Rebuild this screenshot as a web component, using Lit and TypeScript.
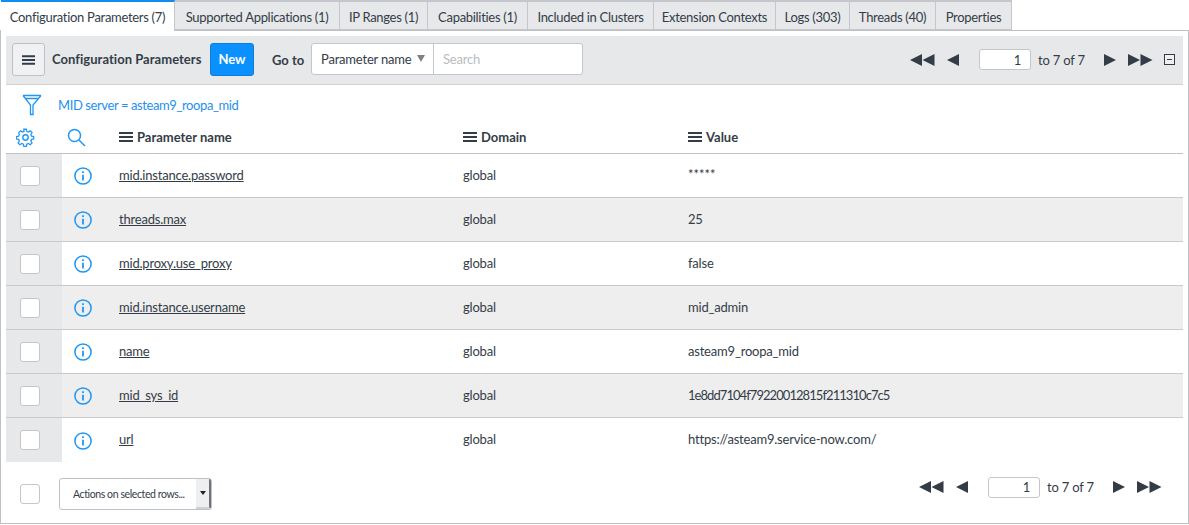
import { LitElement, html, css, svg } from "lit";
import { customElement } from "lit/decorators.js";

const TABS: [string, boolean?][] = [
  ["Configuration Parameters (7)", true],
  ["Supported Applications (1)"],
  ["IP Ranges (1)"],
  ["Capabilities (1)"],
  ["Included in Clusters"],
  ["Extension Contexts"],
  ["Logs (303)"],
  ["Threads (40)"],
  ["Properties"],
];
const ROWS = [
  ["mid.instance.password", "global", "*****", "stars"],
  ["threads.max", "global", "25", ""],
  ["mid.proxy.use_proxy", "global", "false", ""],
  ["mid.instance.username", "global", "mid_admin", ""],
  ["name", "global", "asteam9_roopa_mid", ""],
  ["mid_sys_id", "global", "1e8dd7104f79220012815f211310c7c5", "hash"],
  ["url", "global", "https://asteam9.service-now.com/", ""],
];

const burger = (cls: string) => html`<svg class=${cls} viewBox="0 0 14 10"><path d="M0 0h14v2H0zM0 4h14v2H0zM0 8h14v2H0z" /></svg>`;
const info = html`<svg class="info" viewBox="0 0 20 20" fill="none" stroke="#1f97f5"><circle cx="10" cy="10" r="9" stroke-width="1.7" /><path d="M10 8.5v6.5" stroke-width="2" /><path d="M10 4.8v2" stroke-width="2" /></svg>`;
const tri = (dir: number) => svg`<path d=${dir < 0 ? "M12 0v12L0 6z" : "M0 0v12l12-6z"} />`;
const pager = (bottom: boolean) => html`
  <div class="pager ${bottom ? "bottom" : ""}">
    <svg class="dbl" viewBox="0 0 25 12"><g>${tri(-1)}</g><g transform="translate(12.5)">${tri(-1)}</g></svg>
    <svg class="sgl first" viewBox="0 0 12 12">${tri(-1)}</svg>
    <span class="page">1</span>
    <span class="of">to 7 of 7</span>
    <svg class="sgl next" viewBox="0 0 12 12">${tri(1)}</svg>
    <svg class="dbl" viewBox="0 0 25 12"><g>${tri(1)}</g><g transform="translate(12.5)">${tri(1)}</g></svg>
  </div>`;

@customElement("app-root")
export class AppRoot extends LitElement {
  static styles = css`
    :host { display: block; width: 1189px; height: 525px; background: #fff; color: #343d47; font-family: "Lato", "Noto Sans", sans-serif; font-size: 13px; letter-spacing: -0.2px; overflow: hidden; }
    * { box-sizing: border-box; }
    .tabs { display: grid; grid-template-columns: 174px 165px 88px 100px 126px 122px 74px 86px 76px; margin-left: 1px; width: 1011px; height: 31px; position: relative; z-index: 1; letter-spacing: -0.3px; }
    .tab { height: 30px; background: #e6e8ea; border-top: 2px solid #c4c6cc; border-right: 1px solid #c4c6cc; border-bottom: 1px solid #c4c6cc; display: flex; align-items: center; justify-content: center; white-space: nowrap; padding-top: 2px; }
    .tab.active { background: #fff; border-top-color: #0f8df0; height: 31px; border-bottom: 0; padding-top: 1px; }
    .panel { margin-top: -1px; height: 494px; border: 1px solid #bfc1c6; width: 1189px; padding: 5px 5px 0 5px; display: flex; flex-direction: column; }
    .bar { height: 49px; background: #e6e8ea; border-bottom: 1px solid #cfd1d5; display: flex; align-items: center; padding: 0 0 1px 6px; flex: none; }
    .menu { width: 33px; height: 33px; border: 1px solid #bfc1c6; border-radius: 3px; background: #f0f1f3; display: flex; align-items: center; justify-content: center; }
    .burger { width: 13px; height: 10px; fill: #343d47; }
    .title { font-weight: 700; margin-left: 7px; width: 158px; white-space: nowrap; letter-spacing: 0.04px; padding-bottom: 1px; }
    .new { width: 44px; height: 33px; border-radius: 3px; background: #0a90ff; border: 1px solid #0b7fd8; color: #fff; font-weight: 700; display: flex; align-items: center; justify-content: center; letter-spacing: 0; padding-bottom: 1px; }
    .goto { font-weight: 700; margin-left: 18px; width: 39px; padding-top: 1px; letter-spacing: 0; }
    .search { display: flex; height: 32px; width: 272px; border: 1px solid #c4c6cc; border-radius: 3px; background: #fff; margin-bottom: 1px; }
    .sel { width: 122px; border-right: 1px solid #c4c6cc; display: flex; align-items: center; justify-content: space-between; padding: 0 8px 0 9px; white-space: nowrap; }
    .caret { width: 0; height: 0; border-left: 4px solid transparent; border-right: 4px solid transparent; border-top: 7px solid #7e8287; margin-bottom: 2px; }
    .ph { color: #b9bcc0; padding: 0 9px; display: flex; align-items: center; }
    .right { margin-left: auto; display: flex; align-items: center; padding-right: 8px; }
    .pager { display: flex; align-items: center; height: 22px; }
    .pager svg { fill: #343d47; height: 12px; flex: none; }
    .dbl { width: 25px; }
    .sgl { width: 12px; }
    .first { margin-left: 12px; }
    .page { width: 52px; height: 21px; margin-left: 20px; background: #fff; border: 1px solid #c4c6cc; border-radius: 3px; display: flex; align-items: center; justify-content: flex-end; padding-right: 9px; }
    .of { margin-left: 7px; width: 58px; white-space: nowrap; }
    .next { margin-left: 8px; }
    .pager .next + .dbl { margin-left: 12px; }
    .collapse { width: 11px; height: 11px; margin-left: 11px; border: 1px solid #343d47; display: flex; align-items: center; justify-content: center; background: #eef0f1; }
    .collapse i { width: 5px; height: 1px; background: #343d47; display: block; }
    .filter { height: 40px; flex: none; display: flex; align-items: center; padding-left: 16px; color: #1f8ff0; letter-spacing: -0.4px; }
    .filter svg { width: 20px; height: 22px; margin-top: -1px; }
    .filter span { margin-left: 16px; white-space: nowrap; }
    .grid { display: grid; grid-template-columns: 56px 57px 344px 225px 1fr; }
    .head { height: 29px; border-bottom: 1px solid #c0c2c6; align-items: center; }
    .hc { display: flex; align-items: center; padding: 0 0 3px 10px; }
    .hc + .hc { padding-left: 5px; }
    .hc svg { display: block; }
    .th { display: flex; align-items: center; gap: 4px; font-weight: 700; padding-bottom: 4px; letter-spacing: 0; }
    .th .burger { width: 14px; height: 10px; }
    .row { height: 44px; border-bottom: 1px solid #c8cacd; align-items: center; }
    .row:nth-child(even) { background: #eeeeee; }
    .row:last-child { border-bottom: 0; }
    .cb-cell { align-self: stretch; background: #e6e8ea; display: flex; align-items: center; padding-left: 14px; }
    .cb { width: 20px; height: 20px; background: #fff; border: 1px solid #c4c6cc; border-radius: 3px; display: block; flex: none; }
    .info-cell { display: flex; padding-left: 12px; padding-top: 1px; }
    .info { width: 18px; height: 18px; display: block; }
    .txt { padding-bottom: 2px; }
    .name { text-decoration: underline; text-underline-offset: 1px; }
    .stars { position: relative; top: -1px; letter-spacing: 0; }
    .hash { letter-spacing: -0.94px; }
    .foot { flex: 1; display: flex; align-items: flex-start; padding-left: 14px; position: relative; }
    .foot .cb { margin-top: 22px; }
    .actions { margin-left: 19px; margin-top: 16px; width: 153px; height: 32px; border: 1px solid #bfc1c6; border-radius: 3px; display: flex; background: #fff; font-size: 10.5px; letter-spacing: -0.4px; overflow: hidden; }
    .actions span { flex: 1; display: flex; align-items: center; padding: 0 0 1px 13px; white-space: nowrap; }
    .actions b { width: 15px; background: #eeeff0; border-right: 2px solid #6f7276; border-bottom: 2px solid #cfd1d3; display: flex; align-items: center; justify-content: center; }
    .actions b i { width: 0; height: 0; border-left: 3.5px solid transparent; border-right: 3.5px solid transparent; border-top: 4px solid #222; }
    .foot .pager { margin-left: auto; margin-right: 21px; margin-top: 14px; }
  `;

  render() {
    return html`
      <div class="tabs">${TABS.map(([t, a]) => html`<div class="tab ${a ? "active" : ""}">${t}</div>`)}</div>
      <div class="panel">
        <div class="bar">
          <div class="menu">${burger("burger")}</div>
          <div class="title">Configuration Parameters</div>
          <div class="new">New</div>
          <div class="goto">Go to</div>
          <div class="search">
            <div class="sel">Parameter name<i class="caret"></i></div>
            <div class="ph">Search</div>
          </div>
          <div class="right">
            ${pager(false)}
            <div class="collapse"><i></i></div>
          </div>
        </div>
        <div class="filter">
          <svg viewBox="0 0 20 22" fill="none" stroke="#1f97f5" stroke-width="1.3"><path d="M1 1.5h18M1 1.5 8.5 11v9.5h2.5V11L19 1.5M3.5 4.5h13" /></svg>
          <span>MID server = asteam9_roopa_mid</span>
        </div>
        <div class="grid head">
          <div class="hc"><svg width="19" height="19" viewBox="0 0 24 24" fill="none" stroke="#1f97f5" stroke-width="1.8"><circle cx="12" cy="12" r="3.4" /><path d="M10.2 2h3.6l.6 3 2.3 1 2.6-1.7 2.5 2.5-1.7 2.6 1 2.3 3 .6v3.4l-3 .6-1 2.3 1.7 2.6-2.5 2.5-2.6-1.7-2.3 1-.6 3h-3.6l-.6-3-2.3-1-2.6 1.7-2.5-2.5 1.7-2.6-1-2.3-3-.6v-3.4l3-.6 1-2.3L3.2 6.8l2.5-2.5 2.6 1.7 2.3-1z" transform="translate(12 12) scale(.9) translate(-12.6 -13.6)" /></svg></div>
          <div class="hc"><svg width="19" height="19" viewBox="0 0 19 19" fill="none" stroke="#1f97f5" stroke-width="1.5"><circle cx="7.5" cy="7.5" r="6" /><path d="M12 12l6 6" /></svg></div>
          <div class="th">${burger("burger")}Parameter name</div>
          <div class="th">${burger("burger")}Domain</div>
          <div class="th">${burger("burger")}Value</div>
        </div>
        <div>
          ${ROWS.map((r) => html`
            <div class="grid row">
              <div class="cb-cell"><i class="cb"></i></div>
              <div class="info-cell">${info}</div>
              <div class="txt"><span class="name">${r[0]}</span></div>
              <div class="txt">${r[1]}</div>
              <div class="txt ${r[3]}">${r[2]}</div>
            </div>`)}
        </div>
        <div class="foot">
          <i class="cb"></i>
          <div class="actions"><span>Actions on selected rows...</span><b><i></i></b></div>
          ${pager(true)}
        </div>
      </div>
    `;
  }
}
